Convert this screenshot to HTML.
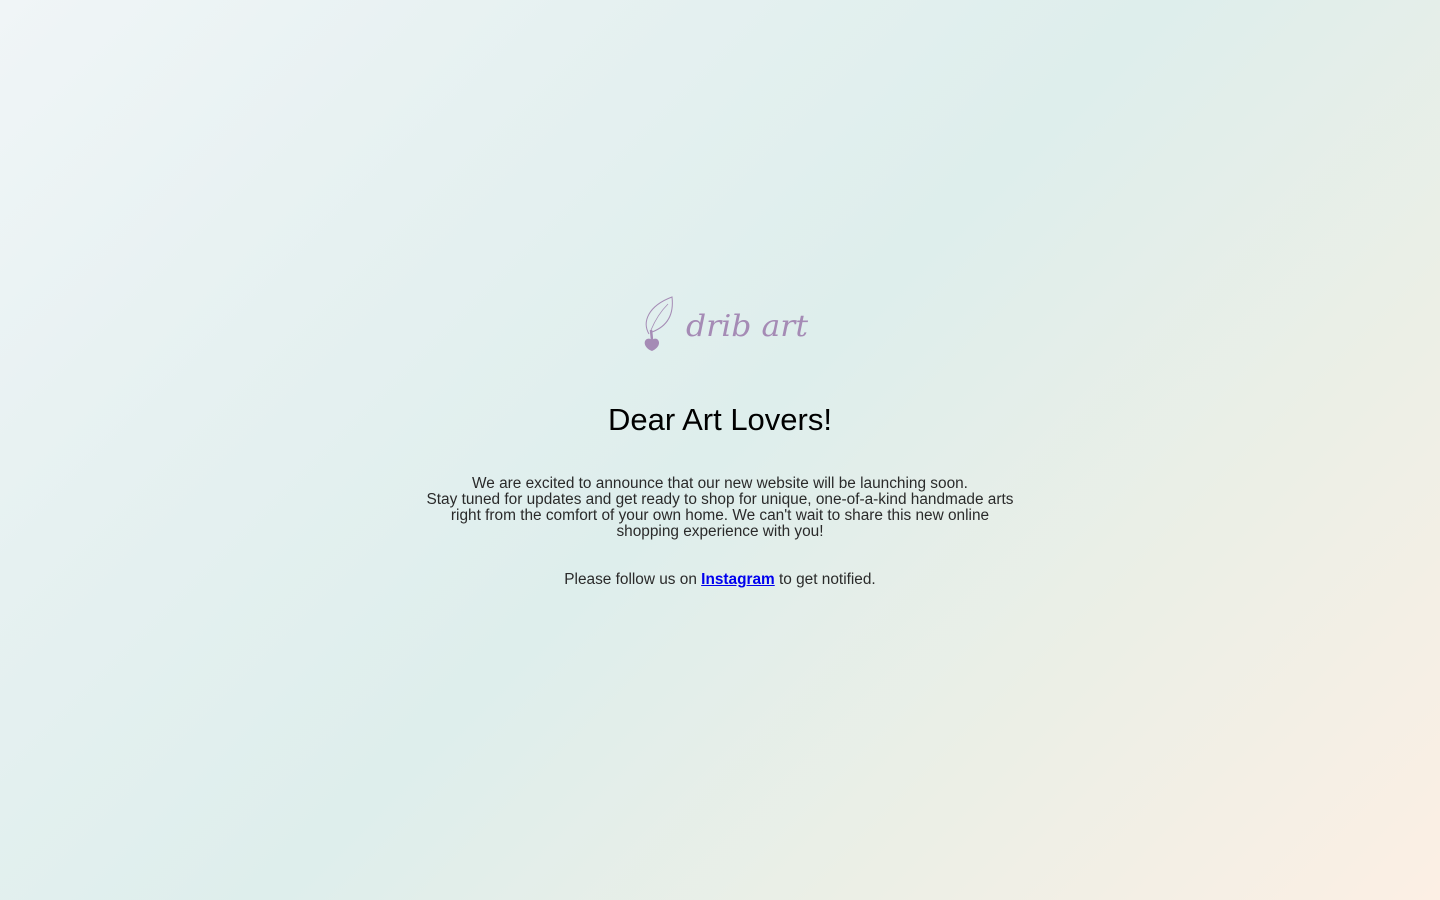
<!DOCTYPE html>
<html><head><meta charset="utf-8"><style>
html,body{margin:0;height:100%;}
body{width:1440px;height:900px;overflow:hidden;background:linear-gradient(135deg,#f0f5f7 0%,#e6f1f1 25%,#deeeec 50%,#ecefe6 75%,#fcefe4 100%);font-family:"Liberation Sans",sans-serif;color:#222;text-align:center;position:relative;}
.logo{position:absolute;left:640px;top:292px;}
h1{position:absolute;top:402px;left:0;width:1440px;margin:0;font-weight:400;font-size:31px;color:#000;}
.p{position:absolute;left:0;width:1440px;font-size:15.4px;line-height:16px;color:#2a2a2a;}
a{color:#00e;font-weight:bold;}
</style></head><body>
<svg class="logo" width="190" height="62" viewBox="0 0 190 62">
<path d="M9 42 C2 30 8 14 32 5 C34 22 28 34 12 40" fill="none" stroke="#a58bb5" stroke-width="1"/>
<path d="M11 38 C16 26 22 18 28 12" fill="none" stroke="#a58bb5" stroke-width="0.8"/>
<path d="M11 38 L12 48" stroke="#a58bb5" stroke-width="2.5"/>
<path d="M12 59 C4 56 3 49 7 47 C9 46 11 47 12 48 C13 47 15 46 17 47 C21 50 19 56 12 59Z" fill="#a58bb5"/>
<text x="46" y="44" font-family="'DejaVu Serif',serif" font-style="italic" font-size="30" fill="#a58bb5" textLength="122" lengthAdjust="spacingAndGlyphs">drib art</text>
</svg>
<h1>Dear Art Lovers!</h1>
<div class="p" style="top:476px">We are excited to announce that our new website will be launching soon.<br>Stay tuned for updates and get ready to shop for unique, one-of-a-kind handmade arts<br>right from the comfort of your own home. We can't wait to share this new online<br>shopping experience with you!</div>
<div class="p" style="top:572px">Please follow us on <a href="#">Instagram</a> to get notified.</div>
</body></html>
